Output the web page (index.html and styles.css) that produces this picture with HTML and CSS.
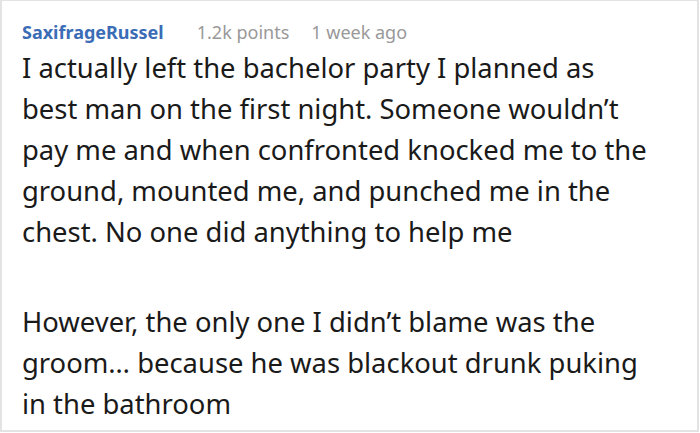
FILE: index.html
```html
<!DOCTYPE html>
<html>
<head>
<meta charset="utf-8">
<link rel="stylesheet" href="styles.css">
</head>
<body>
<div class="comment">
  <div class="meta">
    <span class="author">SaxifrageRussel</span>
    <span class="info points">1.2k points</span>
    <span class="info">1 week ago</span>
  </div>
  <div class="body">
    <p>I actually left the bachelor party I planned as best man on the first night. Someone wouldn’t pay me and when confronted knocked me to the ground, mounted me, and punched me in the chest. No one did anything to help me</p>
    <p>However, the only one I didn’t blame was the groom… because he was blackout drunk puking in the bathroom</p>
  </div>
</div>
</body>
</html>
```
FILE: styles.css
```css
html, body {
  margin: 0;
  padding: 0;
  background: #fff;
}
.comment {
  box-sizing: border-box;
  width: 699px;
  height: 432px;
  border: 2px solid #e3e3e3;
  border-top-width: 1px;
  padding: 16px 45px 0 20px;
  font-family: "Noto Sans", "Open Sans", sans-serif;
  overflow: hidden;
}
.meta {
  display: flex;
  font-size: 18px;
  line-height: 30px;
  white-space: nowrap;
}
.author {
  color: #3b6cb6;
  font-weight: bold;
  margin-right: 33px;
}
.points {
  margin-right: 22px;
}
.info {
  color: #999;
}
.body {
  font-size: 27.4px;
  line-height: 41px;
  color: #1a1a1a;
}
.body p {
  margin: 0 0 49px 0;
}
```
